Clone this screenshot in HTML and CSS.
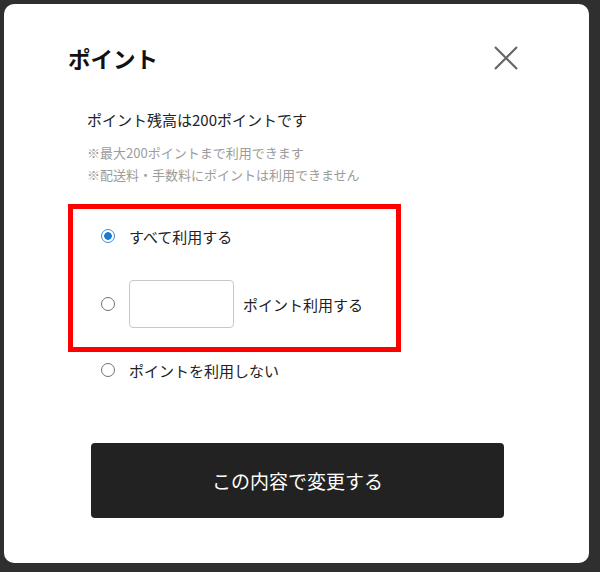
FILE: index.html
```html
<!DOCTYPE html>
<html lang="ja">
<head>
    <meta charset="UTF-8">
    <meta name="viewport" content="width=device-width, initial-scale=1.0">
    <title>ポイント</title>
    <link rel="stylesheet" href="styles.css">
</head>
<body>
    <div class="modal">
        <div class="modal-head">
            <h1>ポイント</h1>
            <button class="close" aria-label="閉じる">
                <svg width="24" height="24" viewBox="0 0 24 24">
                    <path d="M1 1L23 23M23 1L1 23" stroke="#666" stroke-width="2.2" fill="none"/>
                </svg>
            </button>
        </div>

        <div class="modal-body">
            <p class="balance">ポイント残高は200ポイントです</p>
            <p class="note">※最大200ポイントまで利用できます<br>※配送料・手数料にポイントは利用できません</p>

            <!-- 赤枠で囲んだ選択肢 -->
            <div class="highlight">
                <label class="option">
                    <input type="radio" name="point" checked>
                    <span>すべて利用する</span>
                </label>
                <label class="option option-input">
                    <input type="radio" name="point">
                    <input type="text" class="point-box">
                    <span>ポイント利用する</span>
                </label>
            </div>
            <label class="option option-last">
                <input type="radio" name="point">
                <span>ポイントを利用しない</span>
            </label>

            <button class="submit">この内容で変更する</button>
        </div>
    </div>
</body>
</html>
```

FILE: styles.css
```css
body {
    margin: 0;
    height: 572px;
    overflow: hidden;
    font-family: "Noto Sans CJK JP", "Noto Sans", sans-serif;
    background: #2f2f2f;
    color: #222;
}
.modal {
    width: 585px;
    height: 559px;
    margin: 4px 0 0 4px;
    padding: 38px 71px 0 64px;
    box-sizing: border-box;
    background: #fff;
    border-radius: 10px;
}
.modal-head {
    display: flex;
    justify-content: space-between;
    align-items: center;
}
.modal-head h1 {
    margin: 0;
    font-size: 22.5px;
    line-height: 32px;
    font-weight: 700;
    color: #111;
}
.close {
    display: flex;
    padding: 0;
    border: none;
    background: none;
    cursor: pointer;
}
.modal-body {
    margin-top: 36px;
}
.balance {
    margin: 0 0 0 19px;
    font-size: 15px;
    line-height: 20px;
}
.note {
    margin: 12px 0 0 19px;
    font-size: 13px;
    line-height: 22px;
    color: #9c9c9c;
}
.highlight {
    width: 333px;
    margin-top: 18px;
    padding: 12px 0 19px 28px;
    box-sizing: border-box;
    border: 5px solid #f00;
}
.option {
    display: flex;
    align-items: center;
    gap: 14px;
    height: 30px;
    font-size: 15px;
    cursor: pointer;
}
.option-input {
    height: 48px;
    margin-top: 29px;
}
.option-input span {
    margin-left: -5px;
}
.option-last {
    margin: 3px 0 0 33px;
}
.option input[type="radio"] {
    appearance: none;
    width: 14px;
    height: 14px;
    margin: 0;
    flex: none;
    border: 1px solid #707070;
    border-radius: 50%;
    background: #fff;
}
.option input[type="radio"]:checked {
    border-color: #3b8ede;
    background: radial-gradient(circle, #1f78cf 0 3.5px, #fff 4.1px);
}
.point-box {
    width: 105px;
    height: 48px;
    box-sizing: border-box;
    border: 1px solid #c8c8c8;
    border-radius: 4px;
    font-size: 15px;
}
.submit {
    display: block;
    width: 413px;
    height: 75px;
    margin: 58px 0 0 23px;
    border: none;
    border-radius: 4px;
    background: #222;
    color: #fff;
    font-family: inherit;
    font-size: 19px;
    cursor: pointer;
}
```
